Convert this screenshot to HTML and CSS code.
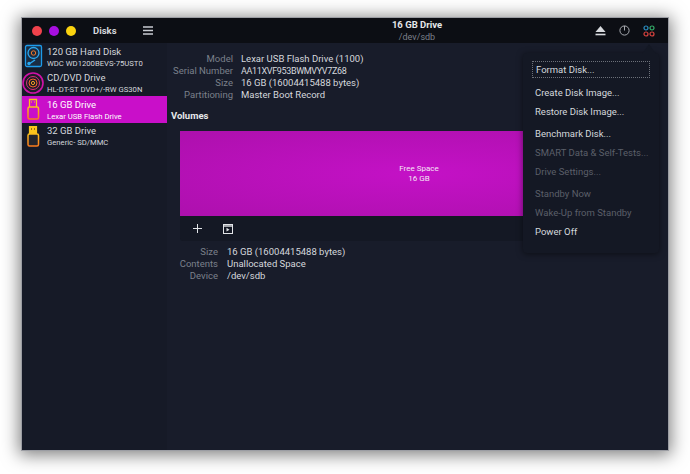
FILE: index.html
```html
<!DOCTYPE html>
<html lang="en">
<head>
    <meta charset="UTF-8">
    <title>Disks</title>
    <link rel="stylesheet" href="styles.css">
</head>
<body>
    <div class="window">
        <header class="titlebar">
            <div class="titlebar-left">
                <div class="lights">
                    <span class="light red"></span>
                    <span class="light purple"></span>
                    <span class="light yellow"></span>
                </div>
                <div class="app-name">Disks</div>
                <svg class="menu-icon" width="10" height="9" viewBox="0 0 10 9"><path d="M0 1h10M0 4.500h10M0 8h10" stroke="#c9ccd2" stroke-width="1.300"/></svg>
            </div>
            <div class="title">
                <div class="title-main">16 GB Drive</div>
                <div class="title-sub">/dev/sdb</div>
            </div>
            <div class="titlebar-right">
                <svg width="11" height="10" viewBox="0 0 11 10"><path d="M5.500 0L10.500 6H.5z" fill="#d8dade"/><path d="M.5 8.500h10" stroke="#d8dade" stroke-width="1.600"/></svg>
                <svg width="11" height="11" viewBox="0 0 11 11"><circle cx="5.500" cy="5.500" r="4.600" fill="none" stroke="#a9acb2"/><path d="M5.500 1v4.500" stroke="#a9acb2"/></svg>
                <svg width="12" height="12" viewBox="0 0 12 12" fill="none" stroke-width="1.200"><circle cx="3" cy="3" r="2" stroke="#2c8fc4"/><circle cx="9" cy="3" r="2" stroke="#35b06a"/><circle cx="3" cy="9" r="2" stroke="#d8433f"/><circle cx="9" cy="9" r="2" stroke="#d8433f"/></svg>
            </div>
        </header>

        <div class="content">
            <aside class="sidebar">
                <div class="drive">
                    <svg class="drive-icon" width="22" height="24" viewBox="0 0 22 24">
                        <rect x="3.500" y="1.500" width="16" height="21" rx="1.500" fill="#1a2c42" stroke="#1d9bea" stroke-width="1.300"/>
                        <circle cx="11.500" cy="9" r="5.500" fill="none" stroke="#2ba8f0" stroke-width="1.300"/>
                        <circle cx="11.500" cy="9" r="2.200" fill="none" stroke="#f07a2a"/>
                        <path d="M7 20l6-4" stroke="#2ba8f0" stroke-width="1.500"/>
                        <circle cx="7" cy="19.500" r="1.700" fill="#2ba8f0"/>
                    </svg>
                    <div class="drive-text">
                        <div class="drive-name">120 GB Hard Disk</div>
                        <div class="drive-model">WDC WD1200BEVS-75UST0</div>
                    </div>
                </div>
                <div class="drive">
                    <svg class="drive-icon" width="22" height="24" viewBox="0 0 22 24">
                        <circle cx="11" cy="12" r="10" fill="#1e1a28" stroke="#d012a8" stroke-width="1.600"/>
                        <circle cx="11" cy="12" r="6.500" fill="none" stroke="#d8327a"/>
                        <circle cx="11" cy="12" r="4" fill="none" stroke="#f0662a"/>
                        <circle cx="11" cy="12" r="1.600" fill="none" stroke="#f6a020"/>
                    </svg>
                    <div class="drive-text">
                        <div class="drive-name">CD/DVD Drive</div>
                        <div class="drive-model">HL-DT-ST DVD+/-RW GS30N</div>
                    </div>
                </div>
                <div class="drive selected">
                    <svg class="drive-icon" width="22" height="24" viewBox="0 0 22 24">
                        <defs>
                            <linearGradient id="usb-body" x1="0" y1="0" x2="0" y2="1">
                                <stop offset="0" stop-color="#fbbf1c"/>
                                <stop offset="1" stop-color="#fb7a1c"/>
                            </linearGradient>
                        </defs>
                        <path d="M7.500 10V2.500h7V10" fill="none" stroke="#fbc51c" stroke-width="1.300"/>
                        <path d="M9 5h1M12 5h1" stroke="#fbc51c"/>
                        <rect x="6" y="10" width="10.500" height="12" rx="1.500" fill="none" stroke="url(#usb-body)" stroke-width="1.500"/>
                    </svg>
                    <div class="drive-text">
                        <div class="drive-name">16 GB Drive</div>
                        <div class="drive-model">Lexar USB Flash Drive</div>
                    </div>
                </div>
                <div class="drive">
                    <svg class="drive-icon" width="22" height="24" viewBox="0 0 22 24">
                        <path d="M7.500 10V2.500h7V10z" fill="#fbc51c" stroke="#fbc51c" stroke-width="1.200"/>
                        <path d="M9 5h1M12 5h1" stroke="#2a2010"/>
                        <rect x="6" y="10" width="10.500" height="12" rx="1.500" fill="#23252c" stroke="url(#usb-body)" stroke-width="1.500"/>
                    </svg>
                    <div class="drive-text">
                        <div class="drive-name">32 GB Drive</div>
                        <div class="drive-model">Generic- SD/MMC</div>
                    </div>
                </div>
            </aside>

            <main class="details">
                <dl class="props drive-props">
                    <dt>Model</dt><dd>Lexar USB Flash Drive (1100)</dd>
                    <dt>Serial Number</dt><dd class="serial">AA11XVF953BWMVYV7Z68</dd>
                    <dt>Size</dt><dd>16 GB (16004415488 bytes)</dd>
                    <dt>Partitioning</dt><dd>Master Boot Record</dd>
                </dl>
                <h2 class="volumes-heading">Volumes</h2>
                <section class="volumes">
                    <div class="volume-bar">
                        <div>Free Space</div>
                        <div>16 GB</div>
                    </div>
                    <div class="volume-tools">
                        <svg width="9" height="9" viewBox="0 0 9 9"><path d="M4.500 0v9M0 4.500h9" stroke="#e2e4e8"/></svg>
                        <svg width="10" height="10" viewBox="0 0 10 10"><rect x=".5" y=".5" width="9" height="9" fill="none" stroke="#e2e4e8"/><path d="M0 2h10" stroke="#e2e4e8" stroke-width="1.400"/><path d="M3.500 3.800l3 1.900-3 1.900z" fill="#e2e4e8"/></svg>
                    </div>
                </section>
                <dl class="props volume-props">
                    <dt>Size</dt><dd>16 GB (16004415488 bytes)</dd>
                    <dt>Contents</dt><dd>Unallocated Space</dd>
                    <dt>Device</dt><dd>/dev/sdb</dd>
                </dl>
            </main>
        </div>

        <div class="popover">
            <div class="popover-item focused">Format Disk...</div>
            <div class="popover-group">
                <div class="popover-item">Create Disk Image...</div>
                <div class="popover-item">Restore Disk Image...</div>
            </div>
            <div class="popover-group">
                <div class="popover-item">Benchmark Disk...</div>
                <div class="popover-item disabled">SMART Data &amp; Self-Tests...</div>
                <div class="popover-item disabled">Drive Settings...</div>
            </div>
            <div class="popover-group">
                <div class="popover-item disabled">Standby Now</div>
                <div class="popover-item disabled">Wake-Up from Standby</div>
                <div class="popover-item">Power Off</div>
            </div>
        </div>
    </div>
</body>
</html>
```

FILE: styles.css
```css
:root {
    --bg-dark: #0c0e14;
    --bg-main: #181c2a;
    --bg-popover: #141824;
    --magenta: #c90fc9;
    --text: #d5d8dd;
    --text-dim: #7b808a;
}

html, body {
    margin: 0;
    height: 100%;
}

body {
    background: #fff;
    font-family: Roboto, "Noto Sans", sans-serif;
    font-size: 9.500px;
    color: var(--text);
    padding: 18px 22px 24px;
    box-sizing: border-box;
    overflow: hidden;
}

.window {
    position: relative;
    height: 432px;
    width: 646px;
    background: var(--bg-main);
    box-shadow: 0 0 0 1px #9b9da3, 0 2px 16px 3px rgba(0, 0, 0, 0.5);
    display: flex;
    flex-direction: column;
}

/* Title bar */
.titlebar {
    height: 25px;
    flex: none;
    background: var(--bg-dark);
    display: grid;
    grid-template-columns: 1fr auto 1fr;
    align-items: center;
}

.titlebar-left {
    display: flex;
    align-items: center;
    padding-left: 10px;
}

.lights {
    display: flex;
    gap: 7px;
}

.light {
    width: 10px;
    height: 10px;
    border-radius: 50%;
}

.light.red { background: #f0424c; }
.light.purple { background: #a80fe0; }
.light.yellow { background: #fbd30f; }

.app-name {
    margin-left: 17px;
    font-weight: 700;
}

.menu-icon {
    margin-left: 26px;
}

.title {
    text-align: center;
    line-height: 12px;
    margin-left: 144px;
}

.title-main {
    font-weight: 700;
    color: #e6e8ea;
}

.title-sub {
    font-size: 9px;
    color: var(--text-dim);
}

.titlebar-right {
    display: flex;
    justify-content: flex-end;
    align-items: center;
    gap: 13px;
    padding-right: 13px;
}

/* Sidebar */
.content {
    flex: 1;
    display: flex;
    min-height: 0;
}

.sidebar {
    width: 145px;
    flex: none;
    background: #161a27;
}

.drive {
    height: 26.500px;
    display: flex;
    align-items: center;
    gap: 3px;
}

.drive.selected {
    background: var(--magenta);
    color: #fff;
}

.drive-icon {
    flex: none;
}

.drive-text {
    padding-top: 2px;
}

.drive-name {
    line-height: 12px;
}

.drive-model {
    font-size: 7.700px;
    line-height: 11px;
    white-space: nowrap;
}

/* Details */
.details {
    flex: 1;
    padding-top: 10px;
}

.props {
    display: grid;
    margin: 0;
    line-height: 12px;
    column-gap: 8px;
}

.props dt {
    text-align: right;
    color: var(--text-dim);
    white-space: nowrap;
}

.props dd {
    margin: 0;
    color: var(--text);
}

.props .serial {
    font-size: 9px;
    letter-spacing: -0.350px;
}

.drive-props {
    grid-template-columns: 66px 1fr;
}

.volume-props {
    grid-template-columns: 51px 1fr;
    column-gap: 9px;
    margin-top: 5px;
}

.volumes-heading {
    margin: 8px 0 0 4px;
    font-size: 9.500px;
    line-height: 14px;
    font-weight: 700;
    color: #e6e8ea;
}

.volumes {
    margin: 8px 10px 0 13px;
    border-radius: 0 0 3px 3px;
    background: #141824;
}

.volume-bar {
    height: 85px;
    background: radial-gradient(ellipse at center, #c411c6, #ad10ad);
    color: #f5e6f5;
    font-size: 8px;
    line-height: 10px;
    display: flex;
    flex-direction: column;
    align-items: center;
    justify-content: center;
}

.volume-tools {
    height: 25px;
    display: flex;
    align-items: center;
    gap: 21px;
    padding-left: 13px;
}

/* Popover menu */
.popover {
    position: absolute;
    top: 35px;
    left: 501px;
    width: 136px;
    height: 200px;
    box-sizing: border-box;
    padding: 8px 9px;
    background: var(--bg-popover);
    border-radius: 4px;
    box-shadow: 0 1px 6px rgba(0, 0, 0, 0.5);
}

.popover::before {
    content: '';
    position: absolute;
    top: -9px;
    right: 3px;
    width: 14px;
    height: 10px;
    background: var(--bg-popover);
    clip-path: polygon(50% 0, 100% 100%, 0 100%);
}

.popover-group {
    margin-top: 4px;
}

.popover-item {
    height: 18.700px;
    line-height: 18.700px;
    padding-left: 3px;
    color: var(--text);
    white-space: nowrap;
}

.popover-item.disabled {
    color: #5b5f69;
}

.popover-item.focused {
    height: 17px;
    line-height: 16px;
    margin-bottom: 6px;
    box-sizing: border-box;
    border: 1px dotted #6c7079;
}
```
